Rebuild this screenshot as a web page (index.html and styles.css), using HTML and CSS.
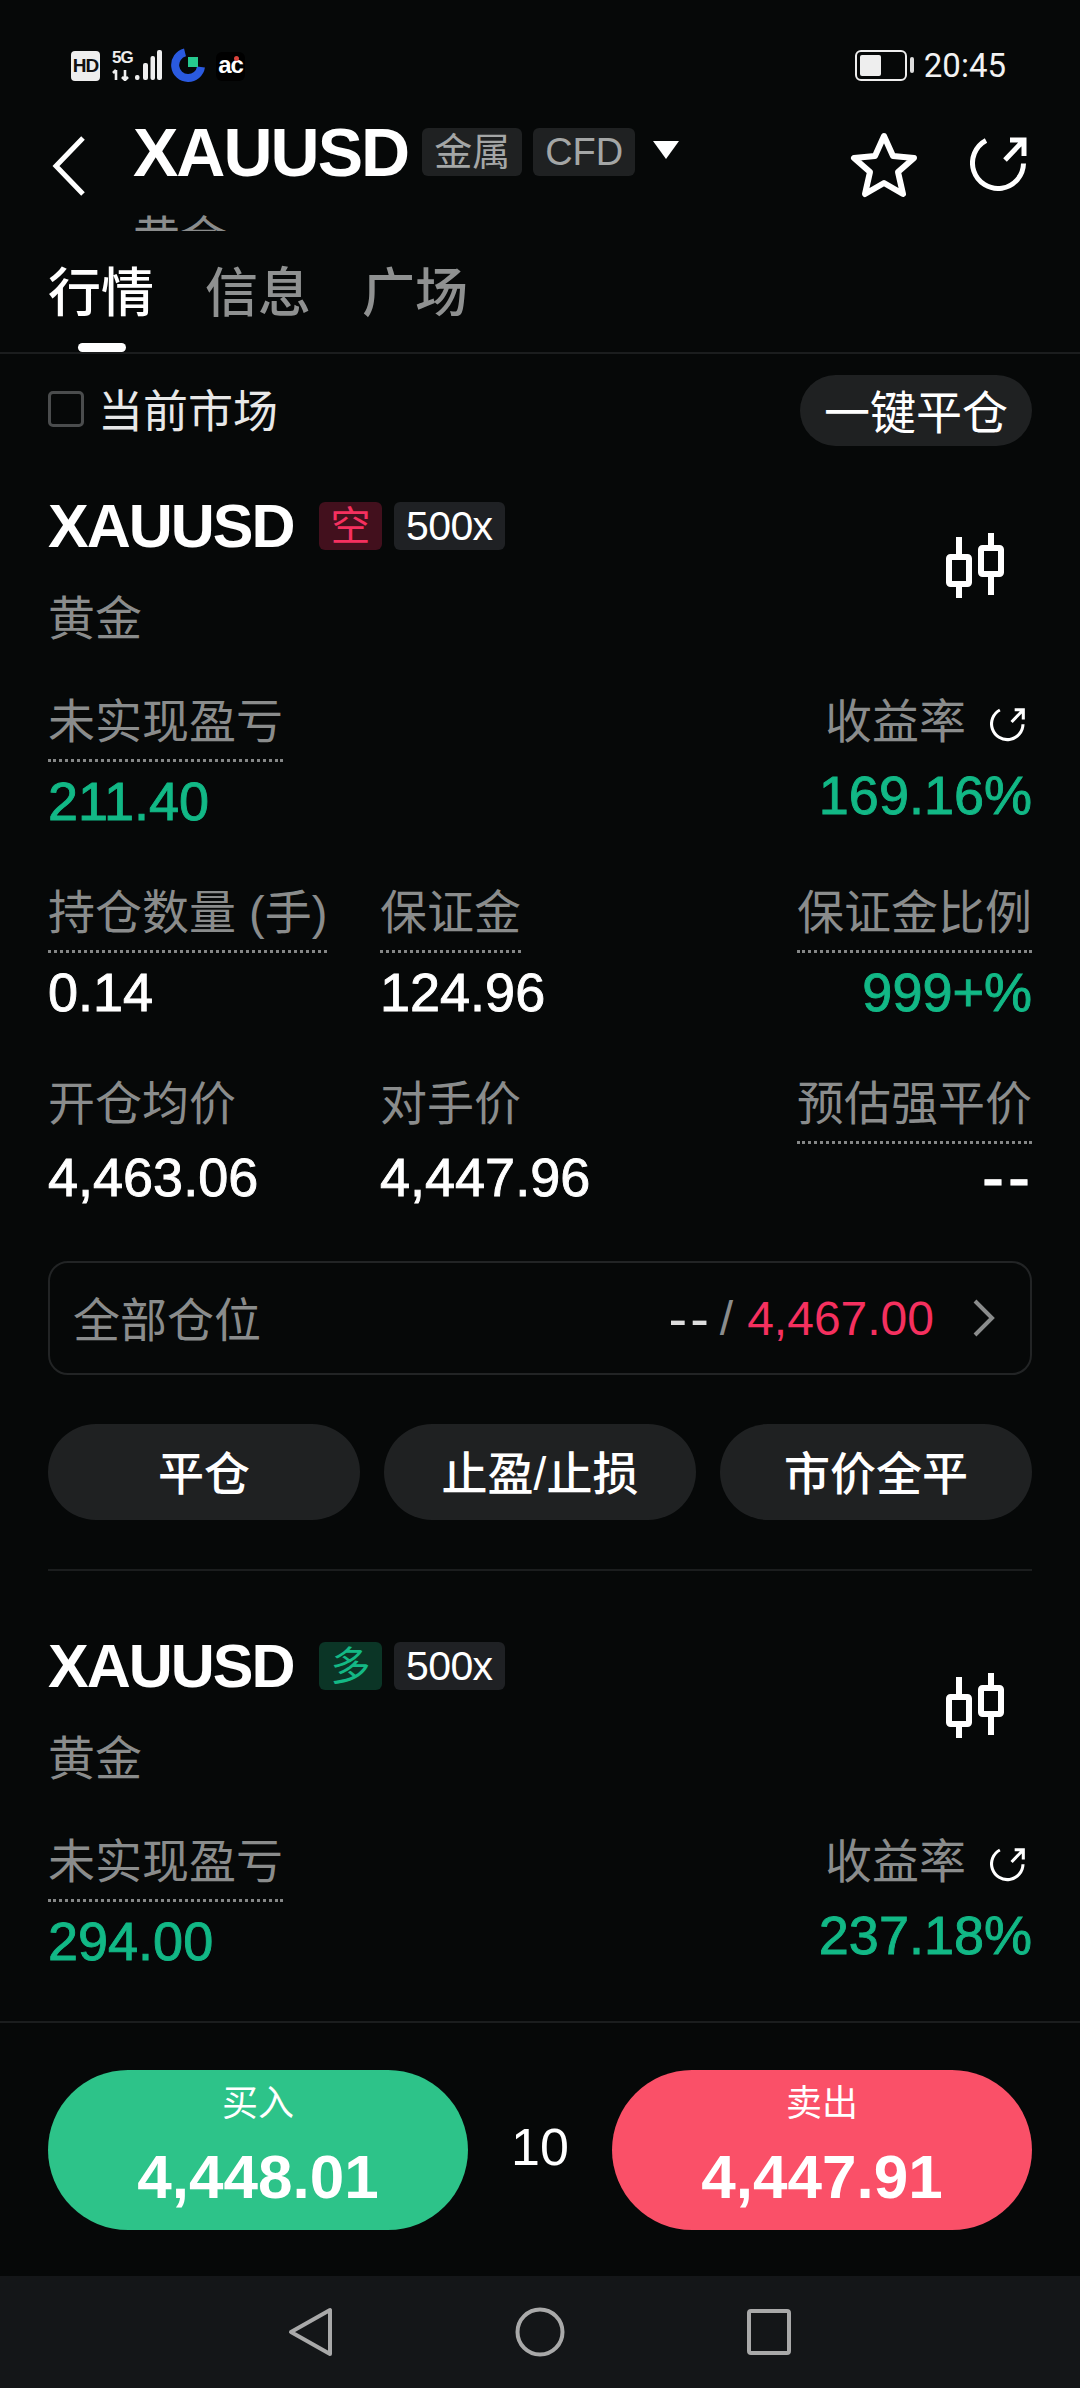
FILE: index.html
```html
<!DOCTYPE html>
<html>
<head>
  <meta charset="utf-8">
  <title>XAUUSD</title>
  <link rel="stylesheet" href="styles.css">
</head>
<body>
<svg class="defs" width="0" height="0">
  <symbol id="share" viewBox="0 0 60 60">
    <path d="M16 6.5A25.5 25.5 0 1 0 53.5 29.5" fill="none" stroke="#fff" stroke-width="5"/>
    <path d="M40 6H54V22M54 6L35 26" fill="none" stroke="#fff" stroke-width="5"/>
  </symbol>
  <symbol id="candle" viewBox="0 0 60 66">
    <g fill="none" stroke="#fff" stroke-width="6">
      <rect x="4" y="25" width="20" height="27" rx="1.5"/>
      <rect x="36" y="16" width="20" height="26" rx="1.5"/>
      <path d="M14 5V25M14 52V66M46 1V16M46 42V63"/>
    </g>
  </symbol>
</svg>

<div class="page">
  <div class="statusbar">
    <div class="status-left">
      <span class="hd">HD</span>
      <div class="signal">
        <span class="fiveg">5G</span>
        <svg class="bars" width="50" height="31" viewBox="0 0 50 31">
          <path d="M4 20V30M1 23L4 20M13 20V30M10 27L13 30L16 27" fill="none" stroke="#eee" stroke-width="2.6"/>
          <g fill="#eee">
            <rect x="23" y="25" width="4.5" height="5" rx="2"/>
            <rect x="31" y="13" width="5" height="17" rx="2"/>
            <rect x="38.5" y="6" width="4.5" height="24" rx="2"/>
            <rect x="45" y="0" width="5" height="30" rx="2"/>
          </g>
        </svg>
      </div>
      <svg class="app-g" width="34" height="35" viewBox="0 0 34 35">
        <path d="M14 4.4A13 13 0 1 0 30 19" fill="none" stroke="#2a5ae0" stroke-width="8"/>
        <rect x="17" y="9" width="10" height="10" fill="#26c98f"/>
      </svg>
      <span class="app-ai">ac<i class="app-dot"></i></span>
    </div>
    <div class="status-right">
      <span class="battery"><i class="battery-fill"></i></span>
      <span class="battery-tip"></span>
      <span class="time">20:45</span>
    </div>
  </div>

  <div class="topbar">
    <svg class="back" width="36" height="62" viewBox="0 0 36 62">
      <path d="M32 3L5 31L32 59" fill="none" stroke="#fff" stroke-width="5"/>
    </svg>
    <div class="topbar-title">
      <div class="symbol-row">
        <span class="symbol">XAUUSD</span>
        <span class="chip">金属</span>
        <span class="chip">CFD</span>
        <span class="caret"></span>
      </div>
      <div class="symbol-sub">黄金</div>
    </div>
    <svg class="star" width="70" height="68" viewBox="0 0 70 68">
      <path d="M35 5L44 25L65 27L49 41L54 63L35 52L16 63L21 41L5 27L26 25Z" fill="none" stroke="#fff" stroke-width="6" stroke-linejoin="round"/>
    </svg>
    <svg class="share-big" width="60" height="60"><use href="#share"/></svg>
  </div>

  <div class="tabs">
    <div class="tab active">行情</div>
    <div class="tab">信息</div>
    <div class="tab">广场</div>
  </div>

  <div class="main">
    <div class="toolbar">
      <label class="check"><span class="checkbox"></span>当前市场</label>
      <button class="pill-btn">一键平仓</button>
    </div>

    <div class="card">
      <div class="card-head">
        <div>
          <div class="card-title">
            <span class="card-symbol">XAUUSD</span>
            <span class="tag tag-short">空</span>
            <span class="tag">500x</span>
          </div>
          <div class="card-sub">黄金</div>
        </div>
        <svg class="candle" width="60" height="66"><use href="#candle"/></svg>
      </div>

      <div class="stats stats-first">
        <div class="stat">
          <div class="label dotted">未实现盈亏</div>
          <div class="value green">211.40</div>
        </div>
        <div class="stat"></div>
        <div class="stat right">
          <div class="label">收益率<svg class="share-small" width="37" height="37"><use href="#share"/></svg></div>
          <div class="value green up">169.16%</div>
        </div>
      </div>
      <div class="stats">
        <div class="stat">
          <div class="label dotted">持仓数量 (手)</div>
          <div class="value">0.14</div>
        </div>
        <div class="stat">
          <div class="label dotted">保证金</div>
          <div class="value">124.96</div>
        </div>
        <div class="stat right">
          <div class="label dotted">保证金比例</div>
          <div class="value green">999+%</div>
        </div>
      </div>
      <div class="stats stats-last">
        <div class="stat">
          <div class="label">开仓均价</div>
          <div class="value up">4,463.06</div>
        </div>
        <div class="stat">
          <div class="label">对手价</div>
          <div class="value up">4,447.96</div>
        </div>
        <div class="stat right">
          <div class="label dotted">预估强平价</div>
          <div class="value up dashes">--</div>
        </div>
      </div>

      <div class="all-pos">
        <span class="all-label">全部仓位</span>
        <span class="all-right">
          <span class="all-dash">--</span>
          <span class="all-slash">/</span>
          <span class="red">4,467.00</span>
          <svg class="chev" width="24" height="38" viewBox="0 0 24 38">
            <path d="M3 2L20 19L3 36" fill="none" stroke="#8a8c8c" stroke-width="4"/>
          </svg>
        </span>
      </div>

      <div class="actions">
        <button class="action">平仓</button>
        <button class="action">止盈/止损</button>
        <button class="action">市价全平</button>
      </div>
    </div>

    <div class="card">
      <div class="card-head">
        <div>
          <div class="card-title">
            <span class="card-symbol">XAUUSD</span>
            <span class="tag tag-long">多</span>
            <span class="tag">500x</span>
          </div>
          <div class="card-sub">黄金</div>
        </div>
        <svg class="candle" width="60" height="66"><use href="#candle"/></svg>
      </div>
      <div class="stats stats-first">
        <div class="stat">
          <div class="label dotted">未实现盈亏</div>
          <div class="value green">294.00</div>
        </div>
        <div class="stat"></div>
        <div class="stat right">
          <div class="label">收益率<svg class="share-small" width="37" height="37"><use href="#share"/></svg></div>
          <div class="value green up">237.18%</div>
        </div>
      </div>
    </div>
  </div>

  <div class="trade">
    <button class="trade-btn buy"><span class="trade-label">买入</span><span class="trade-price">4,448.01</span></button>
    <div class="spread">10</div>
    <button class="trade-btn sell"><span class="trade-label">卖出</span><span class="trade-price">4,447.91</span></button>
  </div>

  <div class="navbar">
    <svg width="46" height="52" viewBox="0 0 46 52">
      <path d="M42 4V48L3 26Z" fill="none" stroke="#a9a9a9" stroke-width="4" stroke-linejoin="round"/>
    </svg>
    <svg width="52" height="52" viewBox="0 0 52 52">
      <circle cx="26" cy="26" r="22.5" fill="none" stroke="#a9a9a9" stroke-width="4"/>
    </svg>
    <svg width="46" height="48" viewBox="0 0 46 48">
      <rect x="3" y="3" width="40" height="42" rx="2" fill="none" stroke="#a9a9a9" stroke-width="4"/>
    </svg>
  </div>
</div>
</body>
</html>
```

FILE: styles.css
```css
* {
  box-sizing: border-box;
}
body {
  margin: 0;
  background: #060808;
  color: #fff;
  font-family: "Liberation Sans", "Noto Sans CJK SC", sans-serif;
}
.defs {
  display: block;
  height: 0;
}
.page {
  width: 1080px;
  height: 2388px;
  display: flex;
  flex-direction: column;
  overflow: hidden;
}

/* status bar */
.statusbar {
  height: 100px;
  flex: none;
  padding: 48px 74px 0 71px;
  display: flex;
  justify-content: space-between;
  align-items: flex-start;
}
.status-left {
  display: flex;
  align-items: flex-start;
}
.hd {
  width: 29px;
  height: 30px;
  margin-top: 3px;
  background: #eee;
  color: #111;
  border-radius: 4px;
  font-size: 19px;
  font-weight: bold;
  line-height: 30px;
  text-align: center;
  letter-spacing: -1px;
}
.signal {
  width: 50px;
  height: 31px;
  margin: 2px 0 0 12px;
  position: relative;
}
.fiveg {
  position: absolute;
  left: 0;
  top: -1px;
  font-size: 17px;
  line-height: 17px;
  font-weight: bold;
  letter-spacing: -1px;
  color: #eee;
}
.bars {
  display: block;
}
.app-g {
  margin-left: 9px;
  flex: none;
}
.app-ai {
  width: 29px;
  height: 29px;
  margin: 4px 0 0 11px;
  position: relative;
  background: #000;
  border-radius: 6px;
  font-size: 24px;
  line-height: 25px;
  font-weight: bold;
  letter-spacing: -1px;
  text-align: center;
  color: #fff;
}
.app-dot {
  position: absolute;
  left: 18px;
  top: 4px;
  width: 5px;
  height: 5px;
  border-radius: 50%;
  background: #d9433c;
}
.status-right {
  display: flex;
  align-items: center;
  height: 34px;
}
.battery {
  width: 52px;
  height: 31px;
  border: 2.5px solid #eee;
  border-radius: 6px;
  padding: 3px;
  display: block;
}
.battery-fill {
  display: block;
  width: 21px;
  height: 100%;
  background: #eee;
  border-radius: 2px;
}
.battery-tip {
  width: 4px;
  height: 16px;
  margin-left: 3px;
  background: #ddd;
  border-radius: 2px;
}
.time {
  margin-left: 10px;
  font-family: Roboto, sans-serif;
  font-size: 33px;
  color: #f2f2f2;
}

/* top bar */
.topbar {
  height: 131px;
  flex: none;
  display: flex;
  align-items: flex-start;
  overflow: hidden;
}
.back {
  margin: 35px 0 0 51px;
  flex: none;
}
.topbar-title {
  width: 703px;
  margin-left: 46px;
}
.symbol-row {
  display: flex;
  align-items: center;
  height: 76px;
  margin-top: 14px;
}
.symbol {
  font-size: 68px;
  font-weight: bold;
  letter-spacing: -2px;
}
.chip {
  height: 48px;
  line-height: 48px;
  padding: 0 12px;
  margin-left: 11px;
  background: #1f2122;
  color: #a4a6a6;
  border-radius: 6px;
  font-size: 38px;
}
.symbol + .chip {
  margin-left: 14px;
}
.caret {
  margin: 0 0 4px 18px;
  border-left: 13px solid transparent;
  border-right: 13px solid transparent;
  border-top: 18px solid #fff;
}
.symbol-sub {
  margin-top: 26px;
  font-size: 47px;
  line-height: 46px;
  color: #8a8c8c;
}
.star {
  margin: 31px 0 0 13px;
  flex: none;
}
.share-big {
  margin: 34px 0 0 51px;
  flex: none;
}

/* tabs */
.tabs {
  height: 123px;
  flex: none;
  padding: 0 0 0 48px;
  display: flex;
  gap: 51px;
  border-bottom: 2px solid #1b1d1e;
}
.tab {
  position: relative;
  font-size: 53px;
  font-weight: 500;
  line-height: 60px;
  padding-top: 33px;
  color: #8f9191;
}
.tab.active {
  color: #fff;
}
.tab.active::after {
  content: "";
  position: absolute;
  left: 30px;
  bottom: 0;
  width: 48px;
  height: 9px;
  background: #fff;
  border-radius: 5px;
}

/* positions */
.main {
  flex: 1;
  min-height: 0;
  overflow: hidden;
  padding: 0 48px;
}
.toolbar {
  display: flex;
  justify-content: space-between;
  align-items: center;
  padding-top: 21px;
}
.check {
  display: flex;
  align-items: center;
  height: 66px;
  padding-bottom: 4px;
  font-size: 45px;
  color: #e8e8e8;
}
.checkbox {
  width: 36px;
  height: 36px;
  margin-right: 14px;
  border: 3px solid #4a4c4d;
  border-radius: 5px;
}
.pill-btn {
  width: 232px;
  height: 71px;
  border: none;
  border-radius: 36px;
  background: #1f2122;
  color: #fff;
  font-family: inherit;
  font-size: 46px;
  padding: 0 0 4px;
}
.card {
  padding-top: 71px;
}
.toolbar + .card {
  padding-top: 56px;
}
.card-head {
  display: flex;
  justify-content: space-between;
  align-items: flex-start;
}
.card-title {
  display: flex;
  align-items: center;
  height: 48px;
}
.card-symbol {
  font-size: 61px;
  font-weight: bold;
  letter-spacing: -2px;
  margin-right: 25px;
}
.tag {
  height: 48px;
  line-height: 48px;
  padding: 0 12px;
  margin-right: 12px;
  background: #1f2124;
  border-radius: 6px;
  font-size: 41px;
  letter-spacing: -.6px;
}
.tag-short {
  background: #42101d;
  color: #f5305f;
  font-size: 40px;
}
.tag-long {
  background: #0b3526;
  color: #14b985;
  font-size: 40px;
}
.card-sub {
  margin-top: 46px;
  font-size: 47px;
  line-height: 46px;
  color: #8a8c8c;
}
.candle {
  margin: 30px 27px 0 0;
}
.stats {
  display: grid;
  grid-template-columns: 332px 1fr auto;
  height: 191px;
}
.stats-first {
  margin-top: 56px;
}
.stats-last {
  height: 181px;
}
.right {
  text-align: right;
}
.label {
  display: inline-block;
  height: 64px;
  padding-top: 1px;
  font-size: 47px;
  line-height: 46px;
  color: #8a8c8c;
  vertical-align: top;
}
.label.dotted {
  border-bottom: 3px dotted #858787;
}
.share-small {
  margin: 0 5px 0 24px;
  vertical-align: -5px;
}
.value {
  margin-top: 9px;
  font-size: 54px;
  line-height: 60px;
  -webkit-text-stroke: .9px currentColor;
}
.value.up {
  margin-top: 3px;
}
.dashes {
  font-size: 66px;
  letter-spacing: 4px;
  margin-right: -2px;
}
.green {
  color: #12b886;
}
.red {
  color: #f5305f;
}
.all-pos {
  height: 114px;
  padding: 0 34px 0 23px;
  display: flex;
  justify-content: space-between;
  align-items: center;
  border: 2px solid #222425;
  border-radius: 20px;
}
.all-label {
  padding-bottom: 4px;
  font-size: 47px;
  color: #8a8c8c;
}
.all-right {
  display: flex;
  align-items: center;
  font-size: 48px;
}
.all-dash {
  font-size: 56px;
  letter-spacing: 3px;
  color: #ddd;
}
.all-slash {
  margin: 0 14px 0 8px;
  color: #8a8c8c;
}
.chev {
  margin-left: 38px;
}
.actions {
  display: flex;
  gap: 24px;
  margin-top: 49px;
  padding-bottom: 49px;
  border-bottom: 2px solid #1b1d1e;
}
.action {
  flex: 1;
  height: 96px;
  border: none;
  border-radius: 48px;
  background: #1f2122;
  color: #fff;
  font-family: inherit;
  font-size: 46px;
  font-weight: 500;
  padding: 0 0 4px;
}

/* buy / sell */
.trade {
  height: 255px;
  flex: none;
  padding: 47px 48px 0;
  display: flex;
  align-items: flex-start;
  border-top: 2px solid #1b1d1e;
}
.trade-btn {
  width: 420px;
  height: 160px;
  border: none;
  border-radius: 80px;
  color: #fff;
  font-family: inherit;
  padding: 0;
  display: flex;
  flex-direction: column;
  align-items: center;
}
.buy {
  background: #2dc389;
}
.sell {
  background: #fa5068;
}
.trade-label {
  margin-top: 10px;
  font-size: 36px;
  line-height: 48px;
}
.trade-price {
  margin-top: 14px;
  font-size: 62px;
  line-height: 70px;
  font-weight: bold;
}
.spread {
  flex: 1;
  text-align: center;
  font-size: 52px;
  line-height: 60px;
  margin-top: 47px;
}
.navbar {
  height: 112px;
  flex: none;
  background: #141618;
  display: flex;
  justify-content: center;
  align-items: center;
  gap: 180px;
}
```
